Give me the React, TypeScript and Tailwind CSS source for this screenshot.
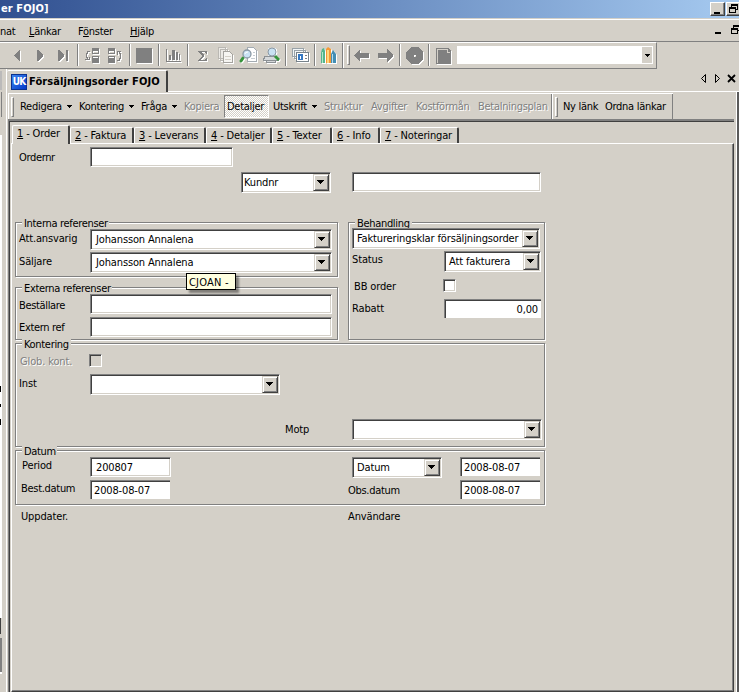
import type { ReactNode } from "react";
import clsx from "clsx";

const sunken = "bg-white border border-t-[#808080] border-l-[#808080] border-b-white border-r-white shadow-[inset_1px_1px_0_#404040,inset_-1px_-1px_0_#d4d0c8]";

function DropArrow() {
  return (
    <svg width="7" height="4" viewBox="0 0 7 4" shapeRendering="crispEdges">
      <path d="M0 0h7v1h-1v1h-1v1h-1v1h-1v-1h-1v-1h-1v-1h-1z" />
    </svg>
  );
}

function Input({ className, value }: { className: string; value?: string }) {
  return <div className={clsx(sunken, "shrink-0 whitespace-nowrap leading-[14px] pl-[5px] pt-[3px]", className)}>{value}</div>;
}

// date and amount boxes have no light edge at the bottom right
function FlatInput({ className, value }: { className: string; value: string }) {
  return (
    <div className={clsx("h-[19px] shrink-0 whitespace-nowrap bg-white border-t border-l border-[#808080] shadow-[inset_1px_1px_0_#404040] leading-[14px] pt-[3px] pl-[3px]", className)}>
      {value}
    </div>
  );
}

function Combo({ className, value }: { className: string; value?: string }) {
  return (
    <div className={clsx(sunken, "h-[21px] shrink-0 flex p-px whitespace-nowrap", className)}>
      <span className="flex-1 min-w-0 leading-[14px] pt-[2px]">{value}</span>
      <span className="w-4 h-[17px] shrink-0 bg-[#d4d0c8] border border-t-[#d4d0c8] border-l-[#d4d0c8] border-b-[#404040] border-r-[#404040] shadow-[inset_1px_1px_0_#fff,inset_-1px_-1px_0_#808080] pl-[3px] pt-[5px]">
        <DropArrow />
      </span>
    </div>
  );
}

function Check({ className, disabled }: { className?: string; disabled?: boolean }) {
  return <div className={clsx(sunken, "w-[13px] h-[13px] shrink-0", disabled && "bg-[#d4d0c8]!", className)} />;
}

function Group({ title, legend, className, children }: { title: string; legend: string; className: string; children: ReactNode }) {
  return (
    <section className={clsx("relative shrink-0 border border-[#808080] shadow-[1px_1px_0_#fff,inset_1px_1px_0_#fff]", className)}>
      <h3 className={clsx("absolute left-[6px] -top-[6px] h-[14px] pl-[2px] leading-[14px] tracking-[-0.32px] bg-[#d4d0c8] whitespace-nowrap", legend)}>{title}</h3>
      <div className="relative">{children}</div>
    </section>
  );
}

function Label({ className, children }: { className?: string; children: ReactNode }) {
  return <span className={clsx("block shrink-0 whitespace-nowrap leading-[14px]", className)}>{children}</span>;
}

function Sep() {
  return <span className="w-[6px] h-[22px] shrink-0 pl-[2px]"><i className="block w-[2px] h-full bg-[#808080] border-r border-white" /></span>;
}

function Grip() {
  return <span className="block w-[3px] h-5 shrink-0 border border-t-white border-l-white border-r-[#808080] border-b-[#808080]" />;
}

function Tool({ children, className }: { children: ReactNode; className?: string }) {
  return (
    <span className={clsx("w-[23px] shrink-0 flex justify-center", className)}>
      <svg width="17" height="17" viewBox="0 0 17 17" fill="#808080" shapeRendering="crispEdges" className="overflow-visible drop-shadow-[1px_1px_0_#fff]">
        {children}
      </svg>
    </span>
  );
}

function Lens({ x, y }: { x: number; y: number }) {
  return (
    <g transform={`translate(${x} ${y})`} shapeRendering="auto">
      <path d="M-4 4L-6 7" stroke="#37943c" strokeWidth="3" strokeLinecap="round" />
      <circle r="4" fill="#c9e2f3" stroke="#8a98a4" strokeWidth="1.3" />
      <path d="M-2 0Q-2-2 1-2" stroke="#fff" fill="none" />
    </g>
  );
}

function Toolbar() {
  return (
    <div className="flex w-[657px] h-[27px] border-t border-t-white border-b border-b-[#808080] border-r border-r-[#808080]">
      <div className="w-[343px] shrink-0 flex items-center pl-[6px] pb-px border-r border-[#808080]">
        <Tool><path d="M10 3h1v11h-1l-5-5v-1z" /></Tool>
        <Tool><path d="M5 3h1l5 5v1l-5 5h-1z" /></Tool>
        <Tool><path d="M3 3h1l5 5v1l-5 5h-1zM11 3h2v11h-2z" /></Tool>
        <Sep />
        <Tool>
          <path d="M8.500 1.500h6v5h-6zM8.500 9.500h6v6h-6z" fill="none" stroke="#808080" />
          <path d="M9 11h6v5h-6zM9 2h6v2h-6z" />
          <path d="M6 4.500H3.500v2H2.500v4h1v2M1 12.500h5M5.500 10v3" fill="none" stroke="#808080" />
        </Tool>
        <Tool>
          <path d="M1.500 1.500h6v5h-6zM1.500 9.500h6v6h-6z" fill="none" stroke="#808080" />
          <path d="M2 11h6v5h-6zM2 2h6v2h-6z" />
          <path d="M10 13.500h2.500v-2h1v-5h-1v-2M10 4.500h4M10.500 4v4" fill="none" stroke="#808080" />
        </Tool>
        <Sep />
        <Tool><path d="M0 1h16v15h-16z" /></Tool>
        <Sep />
        <Tool><path d="M1 2h1v12h14v1h-15zM4 8h2v5h-2zM7 3h3v10h-3zM11 5h2v8h-2zM14 7h1v6h-1z" /></Tool>
        <Sep />
        <Tool><path d="M4 4h9v3h-1l-1-2h-4l3 3v1l-3 4h4l1-2h1v3h-9v-1l4-4-4-4z" /></Tool>
        <Tool>
          <path d="M1.500 .5h7v11h-7zM3.500 2.500h7v11h-7z" fill="#eceae6" stroke="#bab8b3" />
          <path d="M6.500 4.500h6l3 3v8h-9z" fill="#f6f5f2" stroke="#a5a39f" />
          <path d="M8 9.500h6M8 12.500h6" stroke="#d4d0c8" />
        </Tool>
        <Tool>
          <path d="M7.500.5h6l3 3v11h-9z" fill="#fff" stroke="#a3abb2" />
          <path d="M13 5.500h2M13 8.500h2M11 11.500h4" stroke="#c5ccd1" />
          <Lens x={7} y={7} />
        </Tool>
        <Tool>
          <path d="M1.500 9.500h12l2 4h-15zM3.500 13.500h9v2h-9z" fill="#d5d8da" stroke="#8b9094" />
          <path d="M5 1h8v8h-8z" fill="#e5edf3" />
          <path d="M12 9l4 4" stroke="#37943c" strokeWidth="3" shapeRendering="auto" />
          <circle cx="9" cy="5" r="4" fill="#c9e2f3" stroke="#8a98a4" shapeRendering="auto" />
        </Tool>
        <Sep />
        <Tool>
          <path d="M.5 1.500h11v8h-11zM2.500 3.500h11v8h-11z" fill="#f2f5f6" stroke="#98a2a8" />
          <path d="M4.500 5.500h12v9h-12z" fill="#fff" stroke="#77828a" />
          <path d="M6 7h5v6h-5z" fill="#3578c2" />
          <path d="M8 9h1v3h-1z" fill="#fff" />
          <path d="M13 8h2v1h-2zM13 11h2v1h-2z" />
        </Tool>
        <Sep />
        <Tool className="-ml-px">
          <g shapeRendering="auto">
            <path d="M1 6l1-4 2-1 1 3v12h-4z" fill="#54b58d" />
            <path d="M2 5h1v11h-1z" fill="#b4e5ca" />
            <path d="M6 2l2-2 3 2v14h-5z" fill="#f59a35" />
            <path d="M7 3h2v13h-2z" fill="#ffd67d" />
            <path d="M11 7l2-4 3 4v9h-5z" fill="#438eb4" />
            <path d="M12 7h1v9h-1z" fill="#b7dceb" />
          </g>
        </Tool>
      </div>
      <div className="flex-1 flex items-center pl-[3px] pb-px border-l border-white">
        <Grip />
        <Tool className="ml-px"><path d="M0 8l6-6v4h9v5h-9v4l-6-6z" /></Tool>
        <Tool><path d="M16 8l-6-6v4h-9v5h9v4l6-6z" /></Tool>
        <Sep />
        <Tool><path fillRule="evenodd" d="M5 0h7l5 5v7l-5 5h-7l-5-5v-7zM8 8h2v2h-2z" /></Tool>
        <Sep />
        <Tool><path d="M1 1h12l3 3v13h-15z" /><path d="M2 2.500h10.500v2.500h2.500M2.500 3v13" fill="none" stroke="#d4d0c8" /></Tool>
        <div className="w-[196px] h-[18px] ml-[2px] shrink-0 bg-white p-px flex justify-end">
          <span className="w-[10px] bg-[#d4d0c8] flex items-center justify-center">
            <svg width="5" height="3" shapeRendering="crispEdges"><path d="M0 0h5v1h-1v1h-1v1h-1v-1h-1v-1h-1z" /></svg>
          </span>
        </div>
      </div>
    </div>
  );
}

const actions = [
  { text: "Redigera", width: "w-[59px]", menu: true },
  { text: "Kontering", width: "w-[62px]", menu: true },
  { text: "Fråga", width: "w-[43px]", menu: true },
  { text: "Kopiera", width: "w-[41px]", off: true },
  { text: "Detaljer", width: "w-[45px]", pressed: true },
  { text: "Utskrift", width: "w-[54px]", menu: true },
  { text: "Struktur", width: "w-[47px]", off: true },
  { text: "Avgifter", width: "w-[45px]", off: true },
  { text: "Kostförmån", width: "w-[62px]", off: true },
  { text: "Betalningsplan", width: "w-[72px]", off: true },
];

function ActionBar() {
  return (
    <div className="flex w-[665px] h-[26px] border-t border-white">
      <div className="flex w-[544px] shrink-0 items-center border-l border-l-white border-r border-r-[#808080] pl-[2px]">
        <Grip />
        <div className="flex pl-[5px]">
          {actions.map((a) => (
            <span
              key={a.text}
              className={clsx(
                "h-[23px] pt-[2px] shrink-0 flex items-center whitespace-nowrap",
                a.width,
                a.off && "text-[#808080] [text-shadow:1px_1px_0_#fff]",
                a.pressed && "pl-[2px] border border-t-[#808080] border-l-[#808080] border-b-white border-r-white bg-[repeating-conic-gradient(#fff_0_25%,#d4d0c8_0_50%)] bg-[length:2px_2px]",
                !a.pressed && "pl-[1px]",
                a.text === "Utskrift" && "pl-[4px]!"
              )}
            >
              {a.text}
              {a.menu && (
                <svg width="5" height="3" className="ml-[5px] -mt-[2px]" shapeRendering="crispEdges"><path d="M0 0h5v1h-1v1h-1v1h-1v-1h-1v-1h-1z" /></svg>
              )}
            </span>
          ))}
        </div>
      </div>
      <div className="flex flex-1 items-center border-l border-l-white border-r border-r-[#808080] pl-[2px] whitespace-nowrap">
        <Grip />
        <span className="w-[42px] ml-[5px] pt-[2px]">Ny länk</span>
        <span className="pt-[2px]">Ordna länkar</span>
      </div>
    </div>
  );
}

const tabs = [
  { key: "2", text: "Faktura", width: "w-[64px]" },
  { key: "3", text: "Leverans", width: "w-[72px]" },
  { key: "4", text: "Detaljer", width: "w-[66px]" },
  { key: "5", text: "Texter", width: "w-[60px]" },
  { key: "6", text: "Info", width: "w-[48px]" },
  { key: "7", text: "Noteringar", width: "w-[79px]" },
];

function Tabs() {
  return (
    <div className="flex items-end h-[21px] pl-px whitespace-nowrap leading-[14px] tracking-[-0.15px]">
      {/* the active tab hangs over the panel's top edge */}
      <div className="relative z-10 w-[58px] h-[19px] -mb-px pl-[4px] pt-px bg-[#d4d0c8] border-t border-l border-white border-r-2 border-r-[#404040] rounded-t-[2px]">
        <u className="decoration-1">1</u> - Order
      </div>
      {tabs.map((t) => (
        <div key={t.key} className={clsx("h-4 pl-[4px] pt-px border-t border-l border-white border-r-2 border-r-[#404040] rounded-t-[2px]", t.width)}>
          <u className="decoration-1">{t.key}</u> - {t.text}
        </div>
      ))}
    </div>
  );
}

function OrderForm() {
  return (
    <div className="flex-1 border-t border-l border-white border-r border-b border-r-[#404040] border-b-[#404040] shadow-[inset_-1px_-1px_0_#808080] tracking-[-0.14px]">
      <div className="h-[78px] pt-[3px]">
        <div className="flex">
          <Label className="w-[71px] ml-[7px] pt-[4px] tracking-[-0.35px]">Ordernr</Label>
          <Input className="w-[143px] h-5" />
        </div>
        <div className="flex mt-[5px] ml-[229px] gap-[21px]">
          <Combo className="w-[90px] pl-[2px]" value="Kundnr" />
          <Input className="w-[189px] h-5" />
        </div>
      </div>

      <div className="flex ml-[3px] gap-[10px]">
        <div className="flex flex-col">
          <Group title="Interna referenser" legend="w-[87px]" className="w-[323px] h-[55px]">
            <div className="flex pt-[6px]">
              <Label className="w-[74px] pl-[3px] pt-[3px]">Att.ansvarig</Label>
              <Combo className="w-[242px] pl-[5px]" value="Johansson Annalena" />
            </div>
            <div className="flex pt-[2px]">
              <Label className="w-[74px] pl-[3px] pt-[3px]">Säljare</Label>
              <Combo className="w-[242px] pl-[5px]" value="Johansson Annalena" />
            </div>
            <div className="absolute z-10 left-[170px] top-[50px] w-[50px] h-[17px] pl-[2px] leading-[17px] tracking-[0.2px] whitespace-nowrap bg-[#ffffe1] border border-black shadow-[3px_3px_2px_#0006]">
              CJOAN -
            </div>
          </Group>
          <Group title="Externa referenser" legend="w-[90px]" className="mt-[10px] w-[323px] h-[53px]">
            <div className="flex pt-[6px]">
              <Label className="w-[74px] pl-[3px] pt-[5px] tracking-[-0.35px]">Beställare</Label>
              <Input className="w-[242px] h-5" />
            </div>
            <div className="flex pt-[3px]">
              <Label className="w-[74px] pl-[3px] pt-[4px] tracking-[-0.35px]">Extern ref</Label>
              <Input className="w-[242px] h-5" />
            </div>
          </Group>
        </div>
        <Group title="Behandling" legend="w-[57px]" className="w-[197px] h-[118px]">
          <Combo className="mt-[5px] ml-[3px] w-[188px] pl-[4px]" value="Faktureringsklar försäljningsorder" />
          <div className="flex pt-[2px]">
            <Label className="w-[95px] pl-[3px] pt-[2px]">Status</Label>
            <Combo className="w-[97px] pl-[4px]" value="Att fakturera" />
          </div>
          <div className="flex pt-[7px]">
            <Label className="w-[94px] pl-[5px] pt-px">BB order</Label>
            <Check />
          </div>
          <div className="flex pt-[5px]">
            <Label className="w-[95px] pl-[3px] pt-[3px]">Rabatt</Label>
            <FlatInput className="w-[97px] text-right pr-[3px]" value="0,00" />
          </div>
        </Group>
      </div>

      <Group title="Kontering" legend="w-[49px]" className="ml-[3px] mt-[3px] w-[530px] h-[104px]">
        <div className="flex pt-[10px]">
          <Label className="w-[73px] pl-[4px] pt-px -mb-px text-[#808080] [text-shadow:1px_1px_0_#fff]">Glob. kont.</Label>
          <Check disabled />
        </div>
        <div className="flex mt-[6px]">
          <Label className="w-[74px] pl-[3px] pt-[3px]">Inst</Label>
          <Combo className="w-[190px] pl-[4px]" />
        </div>
        <div className="flex mt-[24px]">
          <Label className="w-[336px] pl-[269px] pt-[4px]">Motp</Label>
          <Combo className="w-[190px] pl-[4px]" />
        </div>
      </Group>

      <Group title="Datum" legend="w-[35px]" className="ml-[3px] mt-[3px] w-[530px] h-[55px]">
        <div className="flex pt-[6px]">
          <Label className="w-[74px] pl-[6px] pt-[2px]">Period</Label>
          <Input className="w-[81px] h-5" value="200807" />
          <Combo className="ml-[181px] w-[90px] pl-[4px]" value="Datum" />
          <FlatInput className="ml-[18px] w-20" value="2008-08-07" />
        </div>
        <div className="flex pt-[2px]">
          <Label className="w-[74px] pl-[5px] pt-[2px] tracking-[-0.3px]">Best.datum</Label>
          <FlatInput className="w-20" value="2008-08-07" />
          <Label className="ml-[178px] w-[112px] pt-[4px] tracking-[-0.3px]">Obs.datum</Label>
          <FlatInput className="w-20" value="2008-08-07" />
        </div>
      </Group>
      <div className="flex pl-[9px] mt-[5px]">
        <Label className="w-[327px]">Uppdater.</Label>
        <Label>Användare</Label>
      </div>
    </div>
  );
}

function RestoreGlyph() {
  return (
    <svg width="9" height="9" viewBox="0 0 9 9" shapeRendering="crispEdges">
      <path fillRule="evenodd" d="M2 0h7v6h-2v-1h1v-3h-5v1h-1zM0 3h7v6h-7zM1 5v3h5v-3z" />
    </svg>
  );
}

export default function App() {
  return (
    <div className="w-[739px] h-[692px] overflow-hidden flex flex-col bg-[#d4d0c8] text-black text-[11px] font-['DejaVu_Sans_Condensed','DejaVu_Sans',sans-serif] font-stretch-condensed tracking-[-0.28px]">
      <header className="h-[18px] shrink-0 flex justify-between bg-linear-to-r from-[#315090] to-[#a6caf0]">
        <span className="pl-px leading-[18px] font-bold text-white whitespace-nowrap tracking-[0.1px]">er FOJO]</span>
        <div className="w-[29px] pt-[2px] flex gap-px overflow-hidden">
          {[0, 1].map((i) => (
            <span key={i} className="w-[15px] h-[14px] shrink-0 bg-[#d4d0c8] border border-t-white border-l-white border-r-[#404040] border-b-[#404040] shadow-[inset_-1px_-1px_0_#808080] pl-[2px] pt-px">
              {i === 0 ? <i className="block w-[6px] h-[2px] mt-2 ml-px bg-black" /> : <RestoreGlyph />}
            </span>
          ))}
        </div>
      </header>

      <nav className="h-[23px] mt-px shrink-0 border-t border-t-white border-b border-b-[#808080] flex leading-[23px] whitespace-nowrap">
        <span className="w-[29px]">nat</span>
        <span className="w-[49px]"><u className="decoration-1">L</u>änkar</span>
        <span className="w-[52px]">F<u className="decoration-1">ö</u>nster</span>
        <span><u className="decoration-1">H</u>jälp</span>
        <span className="ml-auto w-[24px] flex pt-[5px] gap-[10px]">
          <i className="block w-[6px] h-[2px] mt-[7px] shrink-0 bg-black" />
          <span className="shrink-0"><RestoreGlyph /></span>
        </span>
      </nav>

      <div className="h-[27px] shrink-0"><Toolbar /></div>

      <div className="flex-1 flex min-h-0">
        <aside className="w-[6px] shrink-0 flex flex-col items-start">
          <div className="w-[2px] h-[19px] mt-[2px] bg-[#bbbaba]" />
          <div className="w-[2px] h-[25px] mt-[2px] bg-[#808080] border-l border-[#d4d0c8]" />
          <div className="w-[2px] h-[483px] mt-[18px] bg-white pt-[250px]">
            <i className="block w-px h-[6px] mt-px bg-black" />
            <i className="block w-px h-[3px] mt-[12px] bg-black" />
            <i className="block w-px h-[6px] mt-[12px] bg-black" />
          </div>
          <div className="w-px h-4 bg-[#404040]" />
          <div className="w-[2px] h-9 mt-[4px] bg-[#808080] border-b-2 border-white" />
        </aside>

        <div className="flex-1 flex flex-col border-l border-white">
          <div className="h-[23px] shrink-0 flex">
            <div className="w-[161px] mt-px pl-[4px] border-t border-t-white border-r-2 border-r-[#404040] rounded-t-[2px] flex items-center font-bold whitespace-nowrap tracking-[0.08px]">
              <span className="w-4 h-4 mr-[2px] bg-linear-to-br from-[#3e83ee] to-[#0637c9] border border-[#0a3290] text-white leading-[14px] text-center text-[10px] tracking-[-0.8px]">UK</span>
              <span className="pt-px">Försäljningsorder FOJO</span>
            </div>
            <div className="flex-1 border-b border-white flex justify-end items-center pr-[3px] pb-[4px]">
              <svg width="36" height="9" viewBox="0 0 36 9" fill="none" stroke="#000">
                <path d="M5.500 .5v8l-4-4zM15.500 .5v8l4-4z" />
                <path d="M28 1l7 7M35 1l-7 7" strokeWidth="1.800" />
              </svg>
            </div>
          </div>
          <div className="flex-1 flex flex-col pl-px pt-px min-h-0 border-r-2 border-[#5a5a5a] shadow-[inset_-1px_0_0_#fff]">
            <ActionBar />
            <div className="flex-1 flex flex-col min-h-0 mr-[3px] border-t-2 border-t-[#808080] border-l border-l-[#808080]">
              <div className="flex-1 flex flex-col min-h-0 border-t border-l border-[#404040] pl-px">
                <Tabs />
                <OrderForm />
              </div>
            </div>
          </div>
        </div>
      </div>
    </div>
  );
}
